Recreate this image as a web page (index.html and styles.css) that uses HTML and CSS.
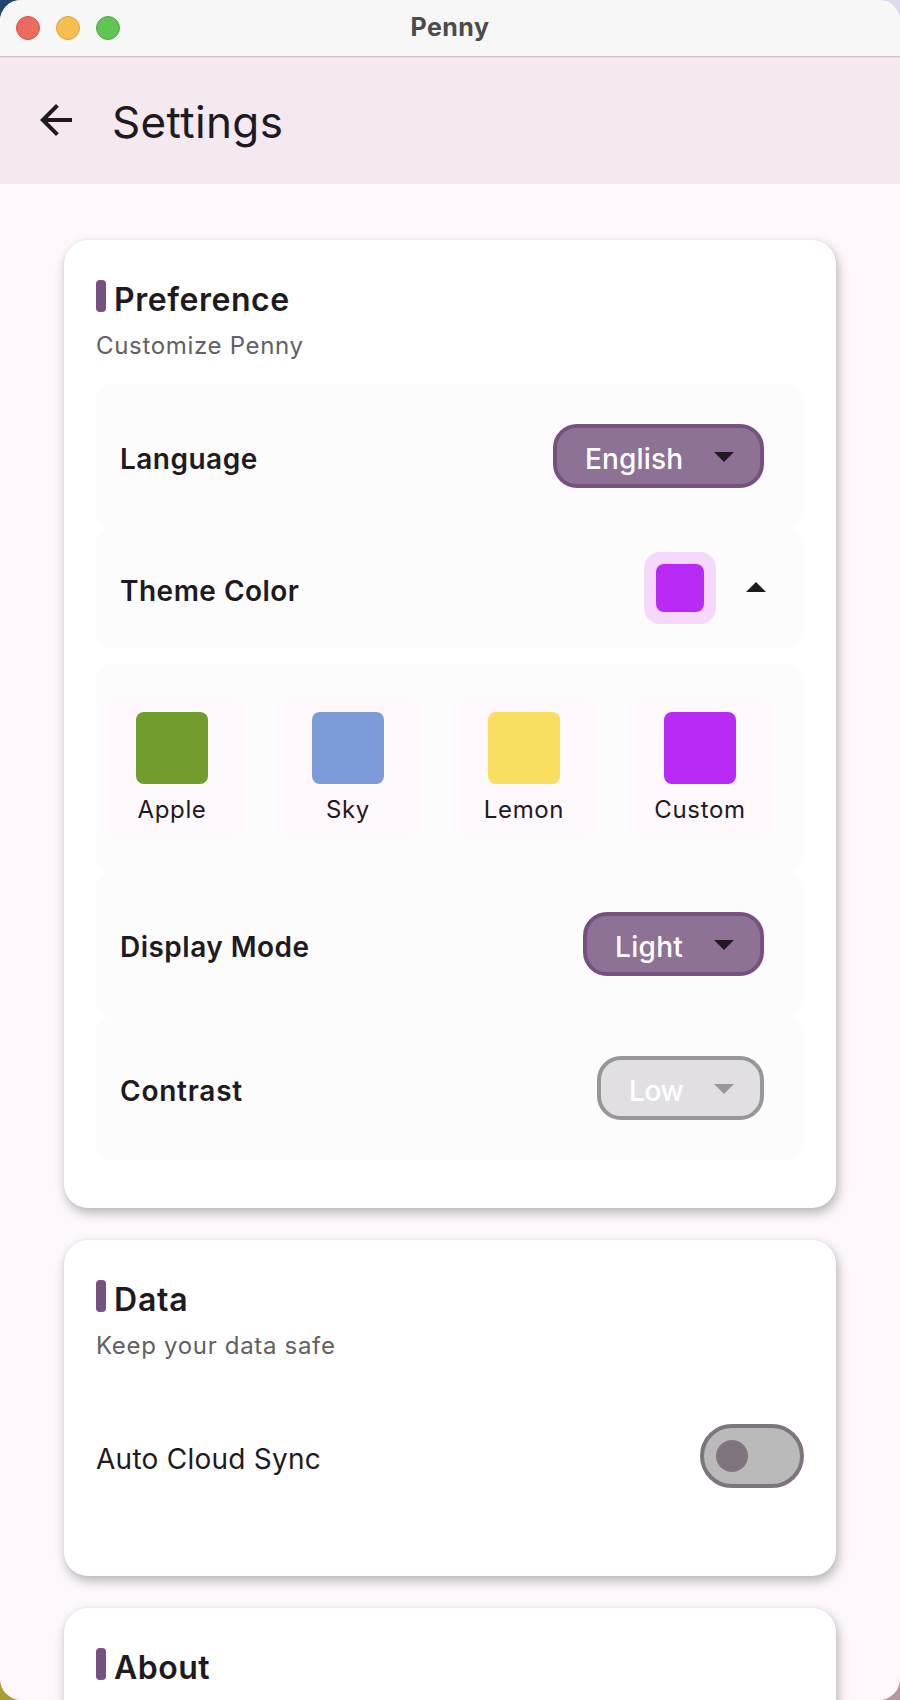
FILE: index.html
```html
<!DOCTYPE html>
<html lang="en">
<head>
<meta charset="utf-8">
<title>Penny</title>
<link rel="stylesheet" href="styles.css">
</head>
<body>
<div class="window">
  <div class="titlebar">
    <div class="lights"><span class="light close"></span><span class="light minimize"></span><span class="light expand"></span></div>
    <span class="window-title">Penny</span>
  </div>
  <header class="appbar">
    <svg class="back" viewBox="0 0 24 24"><path d="M20 11H7.83l5.59-5.59L12 4l-8 8 8 8 1.41-1.41L7.83 13H20v-2z"/></svg>
    <h1>Settings</h1>
  </header>
  <main class="content">
    <section class="card">
      <div class="card-head"><i class="marker"></i><h2>Preference</h2></div>
      <p class="subtitle">Customize Penny</p>
      <div class="tile">
        <span class="label">Language</span>
        <div class="dropdown w-english"><span class="value t-english">English</span><svg class="arrow" viewBox="0 0 24 24"><path d="M7 10l5 5 5-5z"/></svg></div>
      </div>
      <div class="tile theme">
        <span class="label">Theme Color</span>
        <div class="current"><span></span></div>
        <svg class="arrow" viewBox="0 0 24 24"><path d="M7 14l5-5 5 5z"/></svg>
      </div>
      <div class="palette">
        <div class="option"><span class="swatch apple"></span><span class="name">Apple</span></div>
        <div class="option"><span class="swatch sky"></span><span class="name">Sky</span></div>
        <div class="option"><span class="swatch lemon"></span><span class="name">Lemon</span></div>
        <div class="option"><span class="swatch custom"></span><span class="name">Custom</span></div>
      </div>
      <div class="tile">
        <span class="label">Display Mode</span>
        <div class="dropdown w-light"><span class="value">Light</span><svg class="arrow" viewBox="0 0 24 24"><path d="M7 10l5 5 5-5z"/></svg></div>
      </div>
      <div class="tile">
        <span class="label t-contrast">Contrast</span>
        <div class="dropdown disabled w-low"><span class="value t-low">Low</span><svg class="arrow" viewBox="0 0 24 24"><path d="M7 10l5 5 5-5z"/></svg></div>
      </div>
    </section>
    <section class="card">
      <div class="card-head"><i class="marker"></i><h2 class="t-data">Data</h2></div>
      <p class="subtitle">Keep your data safe</p>
      <div class="tile plain">
        <span class="label">Auto Cloud Sync</span>
        <div class="switch"><span></span></div>
      </div>
    </section>
    <section class="card last">
      <div class="card-head"><i class="marker"></i><h2 class="t-about">About</h2></div>
    </section>
  </main>
</div>
</body>
</html>
```
FILE: styles.css
```css
* { box-sizing: border-box; margin: 0; padding: 0; }
body {
  width: 900px; height: 1700px; overflow: hidden;
  font-family: Inter, "Liberation Sans", sans-serif;
  color: #1e1a1f;
  background:
    linear-gradient(#234470, #234470) 0 0 / 40px 40px no-repeat,
    linear-gradient(#dedbef, #dedbef) 100% 0 / 40px 40px no-repeat,
    linear-gradient(#a89d35, #a89d35) 0 100% / 40px 40px no-repeat,
    linear-gradient(#b894a5, #b894a5) 100% 100% / 40px 40px no-repeat;
}
.window {
  width: 900px; height: 1700px; overflow: hidden;
  border-radius: 21px; background: #fef7fb;
  display: flex; flex-direction: column;
}
.titlebar {
  flex: none; height: 57px; background: #f7f7f7;
  border-bottom: 1px solid #cbc0c9;
  display: grid; grid-template-columns: 1fr auto 1fr; align-items: center;
  padding: 0 16px;
}
.lights { display: flex; gap: 16px; }
.light { width: 24px; height: 24px; border-radius: 50%; border: 1px solid; }
.close { background: #ed6a5e; border-color: #d75549; }
.minimize { background: #f5bf4f; border-color: #d9a43c; }
.expand { background: #61c554; border-color: #4fab42; }
.window-title { font-size: 25px; font-weight: 700; line-height: 54px; color: #4b4b4b; height: 56px; letter-spacing: .5px; }
.appbar {
  flex: none; height: 127px; background: #f4e9f1; border-top: 1px solid #e6dae3;
  display: flex; align-items: center; padding: 0 32px; gap: 32px;
}
.back { width: 48px; height: 48px; fill: #1e1a1f; margin-bottom: 2px; }
h1 { font-size: 44px; font-weight: 440; line-height: 56px; padding-top: 2px; letter-spacing: .35px; }
.content { padding: 56px 64px 0; display: flex; flex-direction: column; gap: 32px; }
.card {
  background: #fff; border-radius: 24px; padding: 40px 32px 48px;
  box-shadow: 2px 5px 12px rgba(0, 0, 0, .28), 0 0 3px rgba(0, 0, 0, .05);
}
.last { height: 200px; }
.card-head { display: flex; gap: 8px; height: 40px; }
.marker { width: 10px; height: 32px; border-radius: 4px; background: #755180; }
h2 { font-size: 32px; font-weight: 620; line-height: 40px; letter-spacing: .55px; }
.t-data { letter-spacing: .8px; }
.t-about { letter-spacing: .5px; }
.subtitle { font-size: 24px; line-height: 32px; margin: 10px 0 22px; color: #626063; letter-spacing: .68px; white-space: nowrap; }
.tile {
  height: 144px; border-radius: 16px; background: #fcfcfc;
  display: flex; align-items: center; justify-content: space-between;
  padding: 0 40px 0 24px;
}
.label { font-size: 28px; font-weight: 610; line-height: 40px; padding-top: 6px; letter-spacing: .48px; white-space: nowrap; }
.t-contrast { letter-spacing: .75px; }
.dropdown {
  height: 64px; border: 4px solid #755180; border-radius: 24px; background: #8e7296;
  display: flex; align-items: center; justify-content: space-between; padding: 0 12px 0 28px;
}
.value { font-size: 28px; font-weight: 460; line-height: 40px; padding-top: 6px; color: #fff; letter-spacing: .3px; }
.t-english { letter-spacing: .15px; }
.t-low { letter-spacing: -.4px; }
.w-english { width: 211px; }
.w-light { width: 181px; }
.w-low { width: 167px; }
.arrow { width: 48px; height: 48px; fill: #1e1a1f; flex: none; }
.disabled { background: #e2dfe3; border-color: #979698; }
.disabled .arrow { fill: #979698; }
.theme { height: 120px; padding-right: 24px; }
.current {
  margin-left: auto; margin-right: 16px; width: 72px; height: 72px; padding: 12px;
  border-radius: 16px; background: #f5d8fc;
}
.current span { display: block; height: 48px; border-radius: 8px; background: #ba2af6; }
.palette {
  margin-top: 16px; height: 208px; border-radius: 16px; background: #fcfcfc;
  padding: 32px 4px; display: flex; gap: 32px;
}
.option {
  width: 144px; height: 144px; border-radius: 16px; background: #fef7fb;
  padding-top: 16px; display: flex; flex-direction: column; align-items: center;
}
.swatch { width: 72px; height: 72px; border-radius: 8px; }
.apple { background: #719d2e; }
.sky { background: #7e9bd9; }
.lemon { background: #fade5f; }
.custom { background: #ba2af6; }
.name { font-size: 24px; line-height: 32px; margin-top: 10px; letter-spacing: .65px; }
.plain { background: none; padding: 0; }
.plain .label { font-weight: 400; letter-spacing: .25px; }
.switch {
  width: 104px; height: 64px; border-radius: 32px; border: 4px solid #7d747d; background: #bababa;
  padding: 12px;
}
.switch span { display: block; width: 32px; height: 32px; border-radius: 50%; background: #7d747d; }
```
